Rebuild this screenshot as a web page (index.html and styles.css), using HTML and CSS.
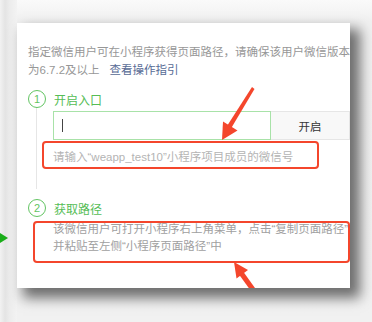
FILE: index.html
```html
<!DOCTYPE html>
<html lang="zh-CN">
<head>
  <meta charset="UTF-8">
  <meta name="viewport" content="width=device-width, initial-scale=1.0">
  <title>页面路径</title>
  <link rel="stylesheet" href="styles.css">
</head>
<body>
  <div class="stage">
    <div class="side">
      <span class="side-arrow"></span>
    </div>

    <div class="card">
      <div class="intro">
        <div class="intro-line">指定微信用户可在小程序获得页面路径，请确保该用户微信版本</div>
        <div class="intro-line"><span>为6.7.2及以上</span><a class="guide" href="#">查看操作指引</a></div>
      </div>

      <div class="step">
        <div class="step-head">
          <span class="step-num">1</span>
          <span class="step-title">开启入口</span>
        </div>
        <div class="step-body with-line">
          <div class="input-row">
            <div class="input-box"><span class="cursor"></span></div>
            <button class="open-btn">开启</button>
          </div>
          <div class="hint">请输入“weapp_test10”小程序项目成员的微信号</div>
        </div>
      </div>

      <div class="step step-two">
        <div class="step-head">
          <span class="step-num">2</span>
          <span class="step-title">获取路径</span>
        </div>
        <div class="step-body">
          <div class="desc">该微信用户可打开小程序右上角菜单，点击“复制页面路径”</div>
          <div class="desc">并粘贴至左侧“小程序页面路径”中</div>
        </div>
      </div>

      <!-- red annotations drawn over the dialog -->
      <div class="mark mark-one"></div>
      <div class="mark mark-two"></div>
      <svg class="arrows" width="333" height="265" viewBox="0 0 333 265">
        <polygon points="235,64 237.5,66 214,105.5 210,103" fill="#f4462c"/>
        <polygon points="205,117 220.5,107.5 206,98.5" fill="#f4462c"/>
        <polygon points="243,272 239,275 222,251.5 226.5,249" fill="#f4462c"/>
        <polygon points="217,239 231,247 219.5,255.5" fill="#f4462c"/>
      </svg>
    </div>
  </div>
</body>
</html>
```

FILE: styles.css
```css
body {
  margin: 0;
  background: linear-gradient(to bottom, #fafafa, #f0f0f0 22px, #f1f1f1);
  font-family: "Liberation Sans", "Noto Sans CJK SC", sans-serif;
  overflow: hidden;
}
.stage {
  display: flex;
  padding-top: 23px;
  height: 299px;
}
.side {
  width: 17px;
  flex-shrink: 0;
  background: linear-gradient(to right, #f2f2f2, #e4e4e4 30%, #ececec 55%, #f3f3f3);
  margin-top: -23px;
  padding-top: 233px;
}
.side-arrow {
  display: block;
  width: 0;
  height: 0;
  border-top: 5px solid transparent;
  border-bottom: 5px solid transparent;
  border-left: 8px solid #1aad19;
}
.card {
  position: relative;
  width: 333px;
  height: 265px;
  background: #fff;
  overflow: hidden;
  box-sizing: border-box;
  padding: 20px 0 0 11px;
  box-shadow: 8px 8px 12px 2px rgba(0, 0, 0, 0.55);
  font-size: 11.5px;
}
.intro-line {
  line-height: 18px;
  color: #979797;
  white-space: nowrap;
}
.guide {
  margin-left: 10px;
  color: #576b95;
  text-decoration: none;
}
.step-head {
  display: flex;
  align-items: center;
  gap: 8px;
  height: 18px;
  margin-top: 11px;
}
.step-two .step-head {
  margin-top: 10px;
}
.step-num {
  width: 16px;
  height: 16px;
  border: 1px solid #62c462;
  border-radius: 50%;
  color: #62c462;
  font-size: 11px;
  display: flex;
  align-items: center;
  justify-content: center;
}
.step-title {
  color: #56bd56;
  font-size: 12px;
}
.step-body {
  margin-left: 8px;
  padding-left: 16px;
  border-left: 1px solid transparent;
}
.step-body.with-line {
  border-left-color: #e6e6e6;
  padding-top: 4px;
  padding-bottom: 23px;
  margin-top: -1px;
}
.input-row {
  display: flex;
  height: 29px;
}
.input-box {
  width: 221px;
  box-sizing: border-box;
  border: 1px solid #a8e2a8;
  display: flex;
  align-items: center;
  padding-left: 8px;
}
.cursor {
  width: 0;
  height: 13px;
  border-left: 1px solid #444;
}
.open-btn {
  width: 80px;
  height: 29px;
  border: 1px solid #e6e6e6;
  border-left: none;
  background: #f8f8f8;
  color: #353535;
  font-family: inherit;
  font-size: 11.5px;
  padding: 0;
}
.hint {
  margin-top: 8px;
  line-height: 18px;
  color: #b4b4b4;
}
.step-two .step-body {
  padding-top: 4px;
}
.desc {
  line-height: 17px;
  color: #a0a0a0;
  white-space: nowrap;
}
.mark {
  position: absolute;
  border: 2px solid #f4462c;
  border-radius: 4px;
  box-sizing: border-box;
}
.mark-one {
  left: 25px;
  top: 118px;
  width: 277px;
  height: 28px;
}
.mark-two {
  left: 16px;
  top: 198px;
  width: 317px;
  height: 42px;
}
.arrows {
  position: absolute;
  left: 0;
  top: 0;
}
```
